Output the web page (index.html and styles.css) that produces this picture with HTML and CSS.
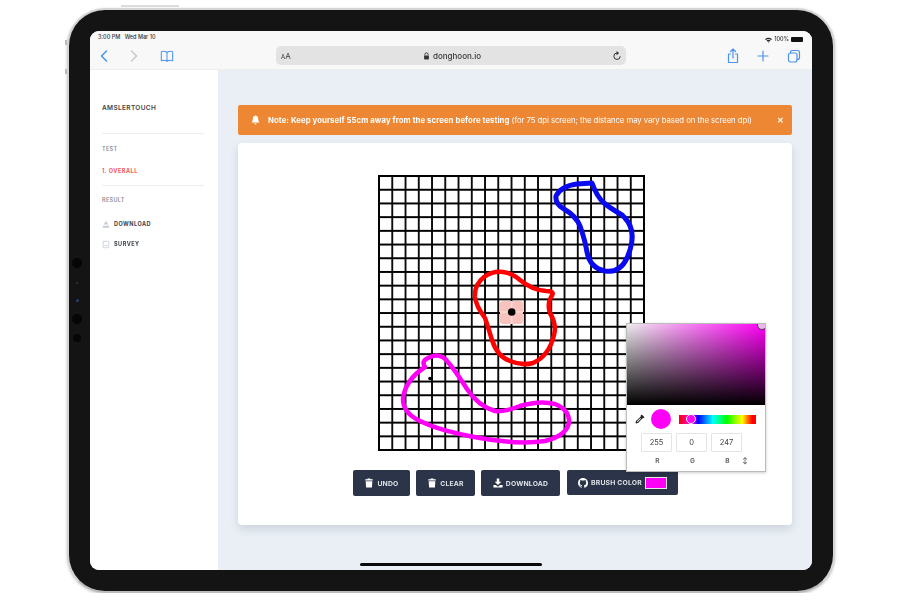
FILE: index.html
```html
<!DOCTYPE html>
<html lang="en">
<head>
    <meta charset="UTF-8">
    <title>AmslerTouch on iPad</title>
    <link rel="stylesheet" href="styles.css">
</head>
<body>
    <div class="tablet">
        <!-- hardware details on the bezel -->
        <span class="top-keys"></span>
        <span class="side-key side-key-a"></span>
        <span class="side-key side-key-b"></span>
        <div class="sensors">
            <span class="sensor"></span>
            <span class="sensor sensor-tiny"></span>
            <span class="sensor sensor-blue"></span>
            <span class="sensor sensor-third"></span>
            <span class="sensor sensor-small"></span>
        </div>

        <div class="screen">
            <!-- Safari chrome -->
            <header class="chrome">
                <div class="status">
                    <span>3:00 PM&nbsp;&nbsp;&nbsp;Wed Mar 10</span>
                    <span class="status-right">
                        <svg class="wifi" viewBox="0 0 12 9"><path d="M0 3Q6-2 12 3L10.500 4.700Q6 1 1.500 4.700ZM2.500 5.500Q6 2.500 9.500 5.500L8 7Q6 5.500 4 7ZM4.800 7.600Q6 6.700 7.200 7.600L6 9Z"/></svg>
                        100%
                        <span class="battery"></span>
                    </span>
                </div>
                <div class="toolbar">
                    <div class="tool-group tool-left">
                        <svg class="tb-icon" viewBox="0 0 14 16"><path class="blue-line" d="M9.500 3L4.500 8L9.500 13"/></svg>
                        <svg class="tb-icon" viewBox="0 0 14 16"><path class="grey-line" d="M4.500 3L9.500 8L4.500 13"/></svg>
                        <svg class="tb-icon tb-book" viewBox="0 0 16 14"><path class="blue-line thin" d="M8 3Q5 0.800 1.500 2V12.500Q5 11 8 13Q11 11 14.500 12.500V2Q11 0.800 8 3V13"/></svg>
                    </div>
                    <div class="address">
                        <span class="text-size"><small>A</small>A</span>
                        <span class="site">
                            <svg class="lock" viewBox="0 0 8 10"><path d="M2 4.500V3A2 2 0 0 1 6 3V4.500" fill="none" stroke="#333" stroke-width="1.100"/><rect x="1" y="4.300" width="6" height="5" rx="1" fill="#333"/></svg>
                            donghoon.io
                        </span>
                        <svg class="reload" viewBox="0 0 12 12"><path d="M6 2.500A3.800 3.800 0 1 0 9.800 6.300" fill="none" stroke="#333" stroke-width="1.200"/><path d="M5.500 0L8.500 2.500L5.500 5Z" fill="#333"/></svg>
                    </div>
                    <div class="tool-group tool-right">
                        <svg class="tb-icon" viewBox="0 0 14 16"><path class="blue-line thin" d="M4.500 6H2.500V14.500H11.500V6H9.500M7 10V1M4.500 3.500L7 1L9.500 3.500"/></svg>
                        <svg class="tb-icon" viewBox="0 0 14 16"><path class="blue-line thin" d="M7 3V13M2 8H12"/></svg>
                        <svg class="tb-icon tb-tabs" viewBox="0 0 14 16"><path class="blue-line thin" d="M3.500 5V4.500Q3.500 2.500 5.500 2.500H10.500Q12.500 2.500 12.500 4.500V9.500Q12.500 11.500 10.500 11.500H10"/><rect class="blue-line thin" x="1.500" y="5" width="8.500" height="9" rx="2"/></svg>
                    </div>
                </div>
            </header>

            <div class="app">
                <aside class="sidebar">
                    <div class="brand">AMSLERTOUCH</div>
                    <div class="nav-block">
                        <div class="nav-title">TEST</div>
                        <div class="nav-item nav-active">1. OVERALL</div>
                    </div>
                    <div class="nav-block">
                        <div class="nav-title">RESULT</div>
                        <div class="nav-item">
                            <svg class="nav-icon" viewBox="0 0 10 10"><path d="M5 0.500L8 5H2ZM1 6.500H9V9H1Z"/></svg>
                            DOWNLOAD
                        </div>
                        <div class="nav-item nav-survey">
                            <svg class="nav-icon" viewBox="0 0 10 10"><path d="M1.500 1H8.500V9H1.500Z" fill="none" stroke="#c5ccd6"/><path d="M3 6H7V7H3Z"/></svg>
                            SURVEY
                        </div>
                    </div>
                </aside>

                <main class="content">
                    <div class="alert">
                        <svg class="bell" viewBox="0 0 10 11"><path d="M5 0.500Q8 1 8 4.500Q8 7 9.500 8.300H0.500Q2 7 2 4.500Q2 1 5 0.500ZM3.800 9.100H6.200Q5.900 10.500 5 10.500Q4.100 10.500 3.800 9.100Z"/></svg>
                        <p class="alert-text"><b>Note: Keep yourself 55cm away from the screen before testing</b> (for 75 dpi screen; the distance may vary based on the screen dpi)</p>
                        <span class="alert-close">&#10005;</span>
                    </div>

                    <section class="card">
                        <svg class="grid" viewBox="378 175 267 277">
                            <defs>
                                <pattern id="cells" x="372.400" y="169.200" width="13.250" height="13.700" patternUnits="userSpaceOnUse">
                                    <path d="M6.620 0V13.700M0 6.850H13.250" stroke="#000" stroke-width="1.800"/>
                                </pattern>
                            </defs>
                            <rect x="378" y="175" width="267" height="276" fill="url(#cells)"/>
                            <rect x="379" y="176" width="265" height="274" fill="none" stroke="#000" stroke-width="1.800"/>

                            <rect x="500" y="301" width="23" height="23" rx="3" fill="#f9c3bd"/>
                            <path d="M511.700 301V324M500 312H523" stroke="#fbdcd8" stroke-width="1.500"/>
                            <circle cx="511.700" cy="312" r="3.800"/>
                            <circle cx="430" cy="378.500" r="1.800"/>

                            <path class="stroke stroke-blue" d="M592 183L577 184Q561 186 556 196Q555 204 564 209Q576 216 580 226Q585 240 587 252Q590 268 605 271Q623 274 630 250Q637 228 622 215Q610 208 604 203Q597 197 592 183Z"/>
                            <path class="stroke stroke-red" d="M503 272Q492 271 484 277Q474 285 475 297Q476 306 485 318Q489 330 492 340Q497 356 510 361Q522 366 533 363Q549 356 554 335Q557 325 550 313Q547 304 551 297Q556 291 546 291Q532 290 520 280Q512 273 503 272Z"/>
                            <path class="stroke stroke-pink" d="M425 367Q421 361 428 358Q437 353 444 358Q451 364 467 389Q478 406 495 411Q505 412 520 406Q540 400 555 404Q570 410 569 423Q566 436 545 441Q520 445 480 438Q440 431 420 421Q403 413 403 399Q405 380 425 367Z"/>
                        </svg>

                        <div class="actions">
                            <button class="btn btn-undo">
                                <svg class="btn-icon" viewBox="0 0 10 12"><path d="M3.500 0.500H6.500L7 1.500H9.500V3H0.500V1.500H3ZM1 3.800H9L8.500 11.500H1.500Z"/></svg>
                                UNDO
                            </button>
                            <button class="btn btn-clear">
                                <svg class="btn-icon" viewBox="0 0 10 12"><path d="M3.500 0.500H6.500L7 1.500H9.500V3H0.500V1.500H3ZM1 3.800H9L8.500 11.500H1.500Z"/></svg>
                                CLEAR
                            </button>
                            <button class="btn btn-download">
                                <svg class="btn-icon" viewBox="0 0 12 12"><path d="M4.500 0.500H7.500V4.500H10L6 8.500L2 4.500H4.500ZM0.500 8.500H3.500L6 10.500L8.500 8.500H11.500V11.500H0.500Z"/></svg>
                                DOWNLOAD
                            </button>
                            <button class="btn btn-brush">
                                <svg class="btn-icon" viewBox="0 0 16 16"><path d="M8 0C3.580 0 0 3.580 0 8c0 3.540 2.290 6.530 5.470 7.590.400.070.550-.170.550-.380 0-.190-.010-.820-.010-1.490-2.010.370-2.530-.490-2.690-.940-.090-.230-.480-.940-.820-1.130-.280-.150-.680-.520-.010-.530.630-.010 1.080.580 1.230.820.720 1.210 1.870.870 2.330.660.070-.520.280-.870.510-1.070-1.780-.200-3.640-.890-3.640-3.950 0-.870.310-1.590.820-2.150-.080-.200-.360-1.020.080-2.120 0 0 .670-.210 2.200.820.640-.180 1.320-.270 2-.270.680 0 1.360.090 2 .270 1.530-1.040 2.200-.820 2.200-.820.440 1.100.160 1.920.080 2.120.510.560.820 1.270.820 2.150 0 3.070-1.870 3.750-3.650 3.950.290.250.540.730.540 1.480 0 1.070-.010 1.930-.010 2.200 0 .210.150.460.550.380A8.013 8.013 0 0016 8c0-4.420-3.580-8-8-8z"/></svg>
                                BRUSH COLOR
                                <span class="swatch"></span>
                            </button>
                        </div>

                        <!-- colour picker popover -->
                        <div class="picker">
                            <div class="picker-field"><span class="field-thumb"></span></div>
                            <div class="picker-body">
                                <div class="picker-row">
                                    <svg class="dropper" viewBox="0 0 12 12"><path d="M8 0.500L11.500 4L9.500 5.500L9 5L4 10.500L1.500 11.500L0.500 10.500L1.500 8L7 3L6.500 2.500Z" fill="#222"/><path d="M6.500 4.800L2.800 8.500L2.300 9.700L3.500 9.200L7.200 5.500Z" fill="#fff"/></svg>
                                    <span class="preview"></span>
                                    <span class="hue"><span class="hue-thumb"></span></span>
                                </div>
                                <div class="rgb-inputs">
                                    <span class="rgb-box">255</span>
                                    <span class="rgb-box">0</span>
                                    <span class="rgb-box">247</span>
                                </div>
                                <div class="rgb-labels">
                                    <span>R</span><span>G</span><span>B</span>
                                    <span class="rgb-toggle">&#8597;</span>
                                </div>
                            </div>
                        </div>
                    </section>
                </main>
            </div>
            <span class="home-bar"></span>
        </div>
    </div>
</body>
</html>
```

FILE: styles.css
```css
body {
    margin: 0;
    background-color: #fff;
    font-family: "Inter", "Liberation Sans", sans-serif;
}
.tablet {
    position: relative;
    box-sizing: border-box;
    width: 768px;
    height: 585px;
    margin: 8px 0 0 67px;
    padding: 21px;
    background-color: #141414;
    border: 2px solid #d4d4d4;
    border-bottom-color: #bbb;
    border-radius: 38px;
    box-shadow: 0 1px 3px rgba(0, 0, 0, 0.25);
}
.top-keys {
    position: absolute;
    left: 52px;
    top: -5px;
    width: 58px;
    height: 2px;
    background-color: #ddd;
}
.side-key {
    position: absolute;
    left: -4px;
    width: 2px;
    height: 5px;
    background-color: #bbb;
}
.side-key-a { top: 30px; }
.side-key-b { top: 59px; }
.sensors {
    position: absolute;
    left: 3px;
    top: 248px;
    display: flex;
    flex-direction: column;
    align-items: center;
    width: 10px;
}
.sensor {
    width: 10px;
    height: 10px;
    margin-bottom: 14px;
    border-radius: 50%;
    background-color: #060606;
}
.sensor-tiny {
    width: 2px;
    height: 2px;
    margin-bottom: 15px;
    background-color: #333;
}
.sensor-blue {
    width: 3px;
    height: 3px;
    margin-bottom: 12px;
    background-color: #27406e;
}
.sensor-third {
    margin-bottom: 10px;
}
.sensor-small {
    width: 8px;
    height: 8px;
}
.screen {
    position: relative;
    display: flex;
    flex-direction: column;
    width: 722px;
    height: 539px;
    overflow: hidden;
    border-radius: 9px;
    background-color: #fff;
    filter: blur(0.35px);
}

/* browser bar */
.chrome {
    flex: none;
    box-sizing: border-box;
    height: 39px;
    background-color: #f8f8f8;
    border-bottom: 1px solid #eee;
}
.status {
    display: flex;
    justify-content: space-between;
    height: 15px;
    padding: 2px 9px 0 8px;
    box-sizing: border-box;
    font-size: 5.500px;
    font-weight: 500;
    line-height: 9px;
    color: #333;
}
.status-right {
    display: flex;
    align-items: center;
    gap: 2px;
}
.wifi {
    width: 7px;
    height: 6px;
    fill: #222;
}
.battery {
    width: 12px;
    height: 5px;
    border-radius: 1px;
    background-color: #111;
}
.toolbar {
    display: flex;
    align-items: center;
    height: 19px;
}
.tool-group {
    display: flex;
    align-items: center;
}
.tool-left {
    width: 186px;
    padding-left: 7px;
    gap: 16px;
    box-sizing: border-box;
}
.tool-right {
    margin-left: 100px;
    gap: 16px;
}
.tb-icon {
    width: 14px;
    height: 16px;
}
.tb-book {
    margin-left: 3px;
}
.tb-tabs {
    margin-left: 1px;
}
.blue-line, .grey-line {
    fill: none;
    stroke: #4a94ec;
    stroke-width: 1.500;
    stroke-linecap: round;
    stroke-linejoin: round;
}
.grey-line {
    stroke: #c8c8c8;
}
.thin {
    stroke-width: 1.200;
}
.address {
    position: relative;
    display: flex;
    align-items: center;
    justify-content: center;
    width: 350px;
    height: 19px;
    border-radius: 5px;
    background-color: #e3e3e3;
    font-size: 8px;
    color: #333;
}
.text-size {
    position: absolute;
    left: 5px;
    font-size: 8px;
}
.text-size small {
    font-size: 6px;
}
.site {
    display: flex;
    align-items: center;
    gap: 3px;
    margin-left: 2px;
    font-weight: 500;
}
.lock {
    width: 7px;
    height: 8px;
}
.reload {
    position: absolute;
    right: 4px;
    width: 10px;
    height: 10px;
}

/* app */
.app {
    flex: 1;
    display: flex;
    min-height: 0;
}
.sidebar {
    flex: none;
    box-sizing: border-box;
    width: 128px;
    padding: 33px 14px 0 12px;
    background-color: #fff;
}
.brand {
    height: 10px;
    padding-bottom: 20px;
    font-size: 6.500px;
    font-weight: 600;
    line-height: 10px;
    letter-spacing: 0.350px;
    color: #444;
}
.nav-block {
    padding-bottom: 10px;
    border-top: 1px solid #eee;
}
.nav-title {
    padding-top: 11px;
    font-size: 5.500px;
    font-weight: 600;
    line-height: 8px;
    letter-spacing: 0.300px;
    color: #8b8f96;
}
.nav-block:last-child .nav-title {
    padding-top: 10px;
}
.nav-item {
    display: flex;
    align-items: center;
    gap: 4px;
    height: 8px;
    padding-top: 16px;
    font-size: 5.500px;
    font-weight: 700;
    line-height: 8px;
    letter-spacing: 0.500px;
    color: #3b3f47;
}
.nav-survey {
    padding-top: 12px;
}
.nav-active {
    padding-top: 14px;
    color: #f4585a;
}
.nav-icon {
    width: 8px;
    height: 9px;
    fill: #c5ccd6;
}
.content {
    flex: 1;
    box-sizing: border-box;
    padding: 35px 20px 0;
    background-color: #e9eff5;
}
.alert {
    display: flex;
    align-items: center;
    height: 30px;
    padding: 0 8px 0 13px;
    border-radius: 2px;
    background-color: #ee8733;
    color: #fff;
}
.bell {
    width: 9px;
    height: 10px;
    fill: #fff;
}
.alert-text {
    flex: 1;
    margin: 0 0 0 8px;
    font-size: 7.780px;
    letter-spacing: -0.060px;
    white-space: nowrap;
}
.alert-text b {
    letter-spacing: 0.070px;
}
.alert-close {
    font-size: 8px;
    font-weight: 700;
}
.card {
    position: relative;
    box-sizing: border-box;
    height: 382px;
    margin-top: 8px;
    padding: 32px 0 0 115px;
    border-radius: 4px;
    background-color: #fff;
    box-shadow: 0 4px 8px rgba(40, 50, 70, 0.14);
}
.grid {
    display: block;
    width: 267px;
    height: 277px;
    margin-left: 25px;
}
.stroke {
    fill: none;
    stroke-width: 4.500;
    stroke-linejoin: round;
}
.stroke-blue {
    stroke: #0a0af0;
    stroke-width: 5;
}
.stroke-red {
    stroke: #f00;
}
.stroke-pink {
    stroke: #ff00f7;
}
.actions {
    display: flex;
    gap: 6px;
    margin-top: 18px;
}
.btn {
    display: flex;
    align-items: center;
    justify-content: center;
    gap: 3px;
    height: 26px;
    padding: 0;
    border: 0;
    border-radius: 2px;
    background-color: #2b3448;
    font-family: inherit;
    font-size: 6.800px;
    font-weight: 700;
    letter-spacing: 0.200px;
    color: #dfe2e8;
}
.btn-undo { width: 57px; }
.btn-clear { width: 59px; }
.btn-download { width: 79px; }
.btn-brush {
    width: 111px;
    height: 25px;
    margin-left: 1px;
}
.btn-icon {
    width: 10px;
    height: 10px;
    fill: #fff;
}
.swatch {
    box-sizing: border-box;
    width: 22px;
    height: 12px;
    border: 1px solid #e8e8e8;
    background-color: #ff00f7;
}

/* picker */
.picker {
    position: absolute;
    left: 388px;
    top: 180px;
    box-sizing: border-box;
    width: 140px;
    height: 149px;
    border: 1px solid #bbb;
    background-color: #fff;
    box-shadow: 0 1px 3px rgba(0, 0, 0, 0.2);
}
.picker-field {
    position: relative;
    height: 81px;
    overflow: hidden;
    background: linear-gradient(to top, #000, rgba(0, 0, 0, 0)), linear-gradient(to right, #eee, #ff00f7);
}
.field-thumb {
    position: absolute;
    right: -2px;
    top: -4px;
    box-sizing: border-box;
    width: 10px;
    height: 10px;
    border: 1px solid #444;
    border-radius: 50%;
    background-color: #e8b8e8;
}
.picker-body {
    padding: 4px 0 0 8px;
}
.picker-row {
    display: flex;
    align-items: center;
    height: 20px;
}
.dropper {
    width: 10px;
    height: 10px;
}
.preview {
    width: 20px;
    height: 20px;
    margin-left: 6px;
    border-radius: 50%;
    background-color: #ff00f7;
}
.hue {
    position: relative;
    width: 77px;
    height: 9px;
    margin-left: 8px;
    background: linear-gradient(to right, #f00 0%, #ff00f7 16%, #00f 25%, #0ff 44%, #0f0 62%, #ff0 82%, #f00 95%);
}
.hue-thumb {
    position: absolute;
    left: 7px;
    top: -1px;
    box-sizing: border-box;
    width: 10px;
    height: 10px;
    border: 1px solid #fff;
    border-radius: 50%;
    background-color: #ff00f7;
}
.rgb-inputs {
    display: flex;
    gap: 4px;
    margin: 4px 0 0 6px;
}
.rgb-box {
    box-sizing: border-box;
    width: 31px;
    height: 19px;
    border: 1px solid #e4e4e4;
    border-radius: 1px;
    font-size: 7.500px;
    line-height: 17px;
    text-align: center;
    color: #444;
}
.rgb-labels {
    display: flex;
    gap: 4px;
    margin: 5px 0 0 7px;
    font-size: 6.500px;
    font-weight: 700;
    line-height: 8px;
    color: #666;
}
.rgb-labels span {
    width: 31px;
    text-align: center;
}
.rgb-labels .rgb-toggle {
    width: 6px;
    margin-left: -5px;
}
.home-bar {
    position: absolute;
    left: 270px;
    bottom: 4px;
    width: 182px;
    height: 3px;
    border-radius: 2px;
    background-color: #0a0a0a;
}
```
